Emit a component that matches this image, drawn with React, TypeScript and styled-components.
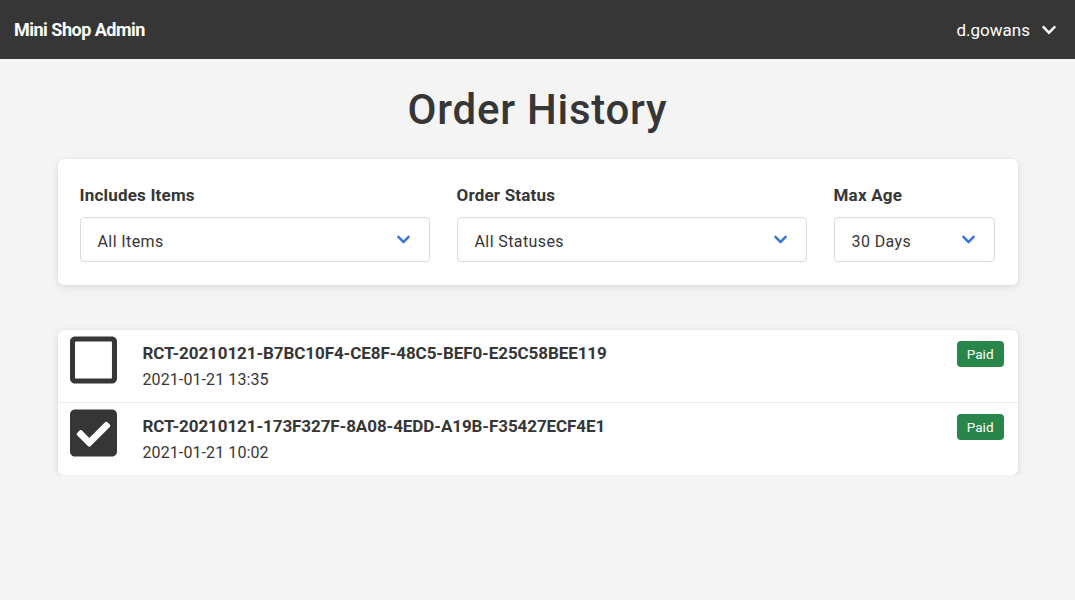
import styled, { createGlobalStyle } from 'styled-components'
import { FaChevronDown, FaRegSquare, FaCheckSquare } from 'react-icons/fa'

const GlobalStyle = createGlobalStyle`
  body {
    margin: 0;
    background: #f4f4f4;
    color: #363636;
    font-family: Roboto, 'Liberation Sans', sans-serif;
  }
`

const NavBar = styled.header`
  height: 59px;
  background: #363636;
  color: #fff;
  display: flex;
  align-items: center;
  justify-content: space-between;
  padding: 0 18px 0 14px;
`

const Brand = styled.div`
  font-size: 18px;
  font-weight: 700;
  letter-spacing: -0.5px;
`

const UserMenu = styled.div`
  display: flex;
  align-items: center;
  gap: 11px;
  font-size: 17px;
`

const Main = styled.main`
  width: 960px;
  margin: 0 auto;
  padding-top: 26px;
`

const Title = styled.h1`
  margin: 0 0 24px;
  text-align: center;
  font-size: 42px;
  font-weight: 500;
  line-height: 50px;
  letter-spacing: 0.75px;
`

const Card = styled.section`
  background: #fff;
  border-radius: 6px;
  box-shadow: 0 2px 8px rgba(10, 10, 10, 0.1), 0 0 0 1px rgba(10, 10, 10, 0.02);
`

const FilterCard = styled(Card)`
  display: grid;
  grid-template-columns: 350px 350px 161px;
  gap: 27px;
  padding: 26px 23px 23px 22px;
  margin-bottom: 45px;
`

const Field = styled.div`
  display: flex;
  flex-direction: column;
  gap: 12px;
`

const Label = styled.label`
  font-size: 17px;
  font-weight: 700;
  letter-spacing: 0.2px;
  line-height: 20px;
`

const Select = styled.div`
  height: 45px;
  box-sizing: border-box;
  border: 1px solid #dbdbdb;
  border-radius: 4px;
  display: flex;
  align-items: center;
  justify-content: space-between;
  padding: 4px 18px 0 17px;
  font-size: 16px;
  letter-spacing: 0.4px;
  color: #363636;
  svg {
    color: #3273dc;
    margin-top: -4px;
  }
`

const OrderList = styled(Card)`
  display: flex;
  flex-direction: column;
`

const OrderRow = styled.div<{ $last?: boolean }>`
  height: 72px;
  display: flex;
  align-items: flex-start;
  padding: 0 14px 0 12px;
  border-bottom: ${p => (p.$last ? 'none' : '1px solid #ededed')};
`

const CheckBox = styled.div`
  width: 47px;
  height: 59px;
  display: flex;
  align-items: center;
  color: #363636;
  margin-right: 26px;
`

const OrderInfo = styled.div`
  flex: 1;
  padding-top: 13px;
`

const OrderId = styled.div`
  font-size: 17px;
  font-weight: 700;
  letter-spacing: -0.08px;
  line-height: 20px;
`

const OrderDate = styled.div`
  font-size: 16px;
  margin-top: 7px;
  letter-spacing: 0.1px;
`

const Badge = styled.span`
  margin-top: 11px;
  background: #28864a;
  color: #fff;
  font-size: 13.5px;
  padding: 0 10px;
  height: 26px;
  line-height: 26px;
  border-radius: 4px;
`

const orders = [
  { id: 'RCT-20210121-B7BC10F4-CE8F-48C5-BEF0-E25C58BEE119', date: '2021-01-21 13:35', checked: false },
  { id: 'RCT-20210121-173F327F-8A08-4EDD-A19B-F35427ECF4E1', date: '2021-01-21 10:02', checked: true },
]

export default function App() {
  return (
    <>
      <GlobalStyle />
      <NavBar>
        <Brand>Mini Shop Admin</Brand>
        <UserMenu>
          d.gowans <FaChevronDown size={16} />
        </UserMenu>
      </NavBar>
      <Main>
        <Title>Order History</Title>
        <FilterCard>
          <Field>
            <Label>Includes Items</Label>
            <Select>All Items <FaChevronDown size={15} /></Select>
          </Field>
          <Field>
            <Label>Order Status</Label>
            <Select>All Statuses <FaChevronDown size={15} /></Select>
          </Field>
          <Field>
            <Label>Max Age</Label>
            <Select>30 Days <FaChevronDown size={15} /></Select>
          </Field>
        </FilterCard>
        <OrderList>
          {orders.map((o, i) => (
            <OrderRow key={o.id} $last={i === orders.length - 1}>
              <CheckBox>
                {o.checked ? <FaCheckSquare size={54} /> : <FaRegSquare size={54} />}
              </CheckBox>
              <OrderInfo>
                <OrderId>{o.id}</OrderId>
                <OrderDate>{o.date}</OrderDate>
              </OrderInfo>
              <Badge>Paid</Badge>
            </OrderRow>
          ))}
        </OrderList>
      </Main>
    </>
  )
}
